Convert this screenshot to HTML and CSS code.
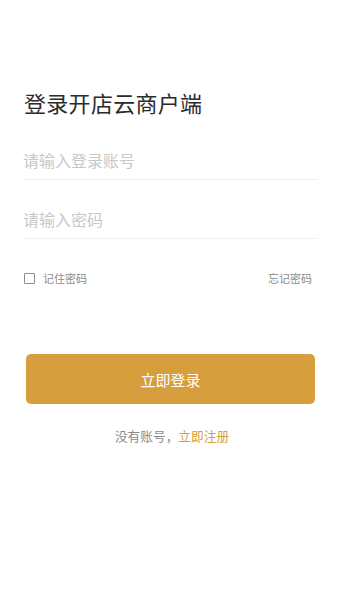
FILE: index.html
```html
<!DOCTYPE html>
<html lang="zh">
<head>
<meta charset="utf-8">
<link rel="stylesheet" href="styles.css">
</head>
<body>
<div class="page">
  <h1 class="title">登录开店云商户端</h1>
  <div class="field"><span class="placeholder">请输入登录账号</span></div>
  <div class="field"><span class="placeholder">请输入密码</span></div>
  <div class="options">
    <label class="remember"><span class="box"></span><span>记住密码</span></label>
    <span class="forgot">忘记密码</span>
  </div>
  <div class="btn">立即登录</div>
  <div class="register">没有账号，<span class="link">立即注册</span></div>
</div>
</body>
</html>
```
FILE: styles.css
```css
* { box-sizing: border-box; margin: 0; padding: 0; }
html, body { background: #fff; }
body {
  font-family: "Noto Sans CJK SC", "Noto Sans", sans-serif;
  width: 338px;
  height: 600px;
  overflow: hidden;
}
.page { padding: 85px 20px 0 23px; }
.title {
  font-size: 22px;
  font-weight: 400;
  color: #2b2b2b;
  line-height: 34px;
  padding-left: 1px;
  letter-spacing: 0.3px;
}
.field {
  height: 59px;
  border-bottom: 1px solid #f0f0f0;
  display: flex;
  align-items: flex-end;
  padding-bottom: 7px;
  width: 295px;
}
.field:first-of-type { height: 61px; }
.placeholder {
  font-size: 16px;
  color: #c8c8c8;
  line-height: 24px;
}
.options {
  display: flex;
  justify-content: space-between;
  align-items: center;
  margin-top: 30px;
  padding-left: 1px;
  padding-right: 6px;
  font-size: 11px;
  color: #8c8c8c;
  line-height: 18px;
}
.remember { display: flex; align-items: center; gap: 8px; }
.box {
  width: 11px; height: 11px;
  border: 1px solid #8c8c8c;
  border-radius: 1px;
  display: inline-block;
}
.btn {
  margin-top: 67px;
  margin-left: 3px;
  width: 289px;
  height: 50px;
  border-radius: 5px;
  background: #d69e3c;
  color: #fff;
  font-size: 15px;
  display: flex;
  align-items: center;
  justify-content: center;
}
.register {
  margin-top: 22px;
  text-align: center;
  font-size: 12.7px;
  color: #8a8a8a;
  line-height: 20px;
  padding-left: 3px;
}
.link { color: #d69e3c; }
```
